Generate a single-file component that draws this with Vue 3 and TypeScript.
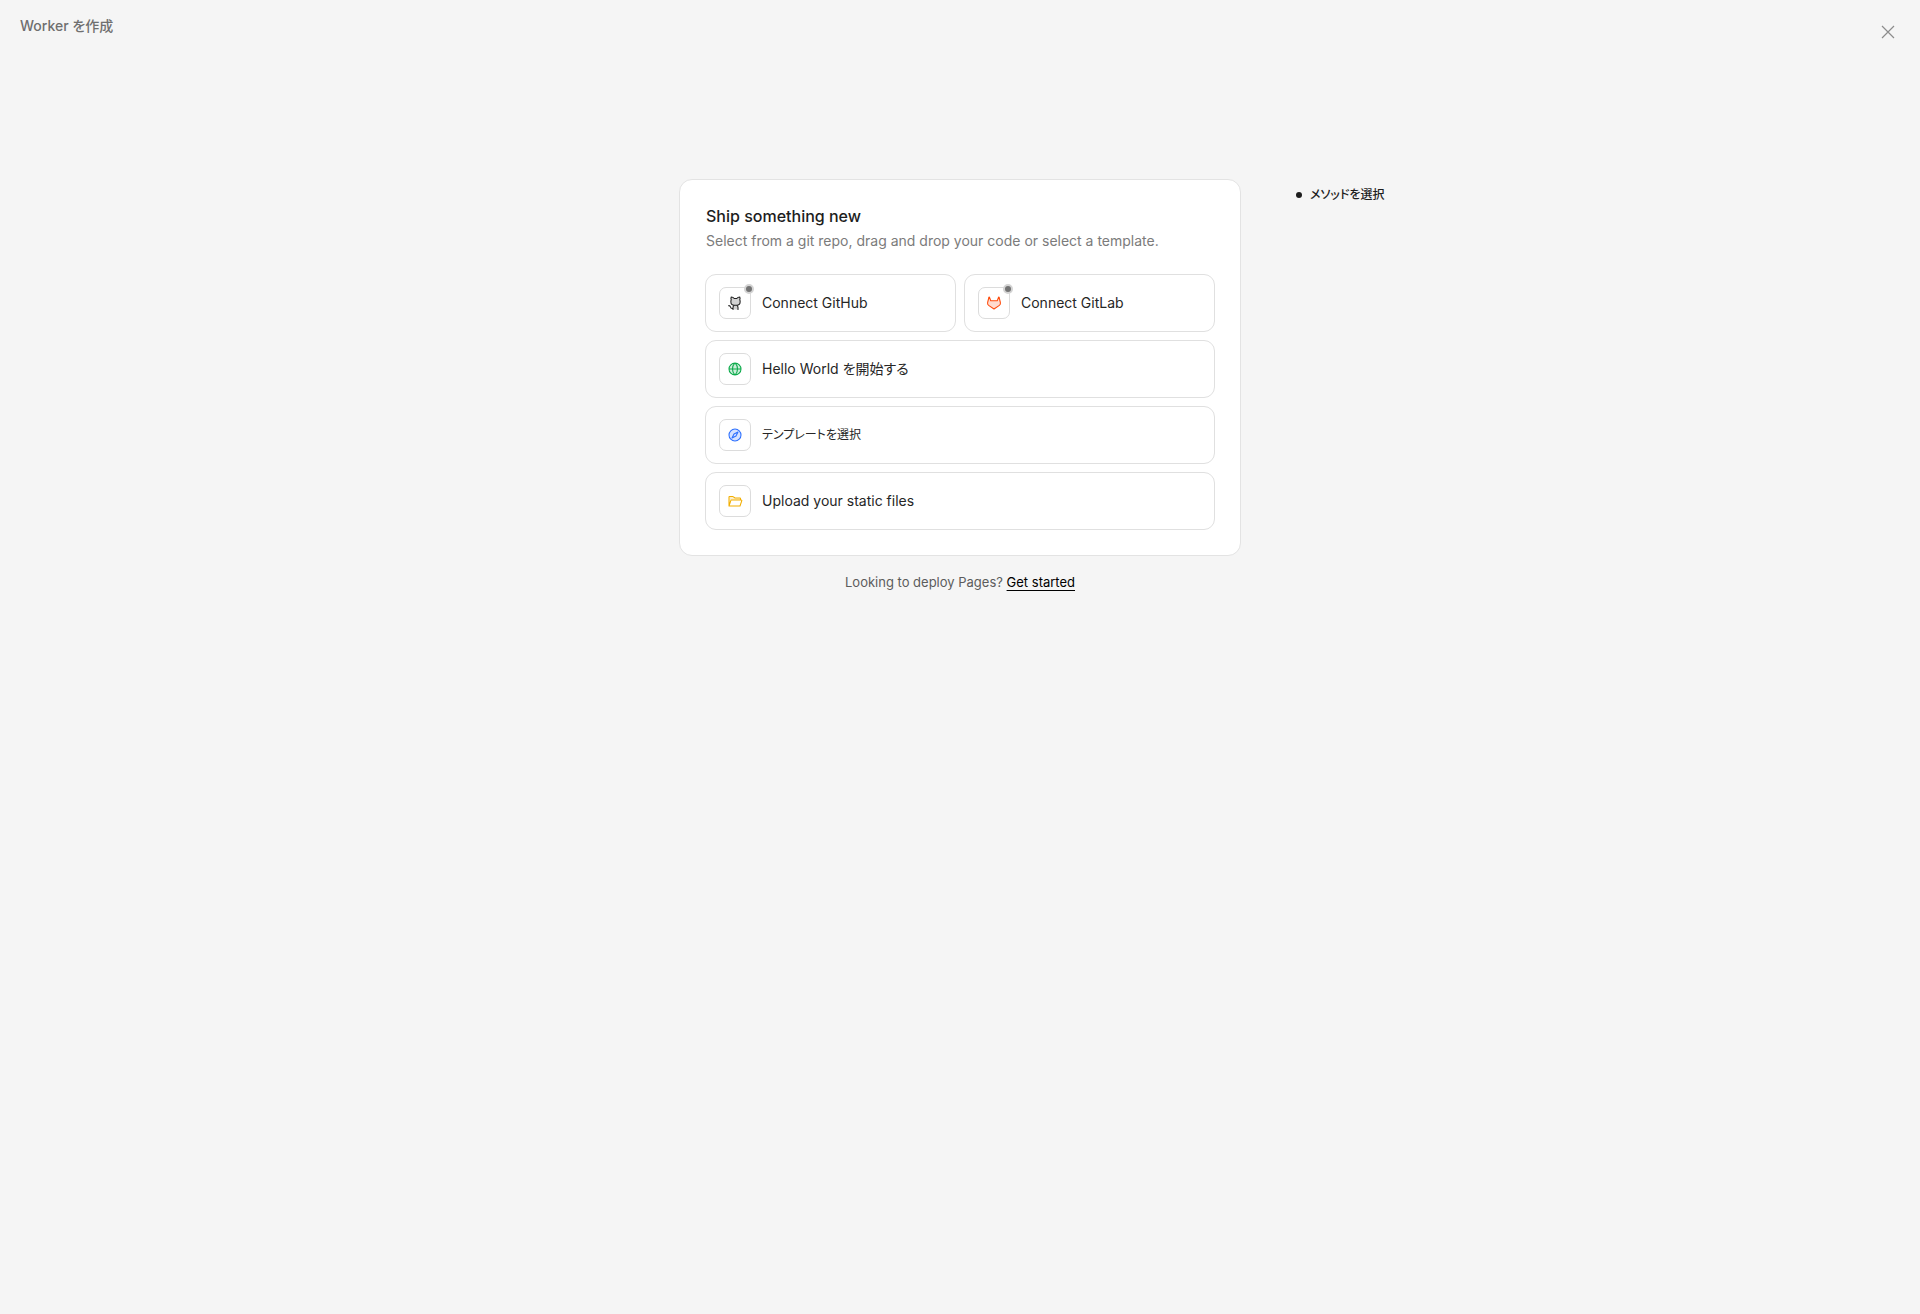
<script setup lang="ts">
interface Option {
  label: string
  color: string
  fill: string
  lines: string
  half?: boolean
  kana?: boolean
}

const options: Option[] = [
  {
    label: 'Connect GitHub',
    color: '#1f1f1f',
    half: true,
    fill: 'M208 104v8a48 48 0 0 1-48 48 32 32 0 0 1 16 32v40H96v-40a32 32 0 0 1 16-32 48 48 0 0 1-48-48v-8a49 49 0 0 1 4-27A52 52 0 0 1 68 32a60 60 0 0 1 48 24h40a60 60 0 0 1 48-24 52 52 0 0 1 0 45A49 49 0 0 1 208 104Z',
    lines: 'M96 232v-32a40 40 0 0 1 18-34M176 232v-32a40 40 0 0 0-18-34M96 216H84a28 28 0 0 1-28-24 28 28 0 0 0-28-22M116 56A60 60 0 0 0 68 32a52 52 0 0 0 0 45A49 49 0 0 0 62 104v8a54 54 0 0 0 54 52h40a54 54 0 0 0 54-52v-8a49 49 0 0 0-6-27A52 52 0 0 0 204 32a60 60 0 0 0-48 24Z',
  },
  {
    label: 'Connect GitLab',
    color: '#ff4c0d',
    half: true,
    fill: 'M26 120 48 36 76 92h104l28-56 22 84a44 44 0 0 1-16 46l-86 58-86-58a44 44 0 0 1-16-46Z',
    lines: 'M26 120 47 36a4 4 0 0 1 8 0L76 92h104l21-56a4 4 0 0 1 8 0l21 84a44 44 0 0 1-16 46l-86 58-86-58a44 44 0 0 1-16-46Z',
  },
  {
    label: 'Hello World を開始する',
    color: '#0cab4b',
    fill: 'M128 32a96 96 0 1 0 0 192 96 96 0 0 0 0-192Z',
    lines: 'M128 32a96 96 0 1 0 0 192 96 96 0 0 0 0-192ZM88 128c0 37 14 71 35 94a8 8 0 0 0 10 0C154 199 168 165 168 128s-14-71-35-94a8 8 0 0 0-10 0C102 57 88 91 88 128ZM32 128h192',
  },
  {
    label: 'テンプレートを選択',
    color: '#2b6fff',
    kana: true,
    fill: 'M128 32a96 96 0 1 0 0 192 96 96 0 0 0 0-192Z',
    lines: 'M128 32a96 96 0 1 0 0 192 96 96 0 0 0 0-192ZM144 144l-64 32 32-64 64-32Z',
  },
  {
    label: 'Upload your static files',
    color: '#f2ae00',
    fill: 'M32 208V64a8 8 0 0 1 8-8h53l35 24h80a8 8 0 0 1 8 8v24H70a8 8 0 0 0-8 6Z',
    lines: 'M32 208V64a8 8 0 0 1 8-8h53a8 8 0 0 1 5 2L128 80h80a8 8 0 0 1 8 8v24M32 208l30-90a8 8 0 0 1 8-6H229a8 8 0 0 1 8 11L208 208Z',
  },
]
</script>

<template>
  <div class="page">
    <header class="top">
      <span class="crumb">Worker を作成</span>
      <button class="close" type="button" aria-label="Close">
        <svg viewBox="0 0 20 20" width="20" height="20" aria-hidden="true">
          <path d="M4 4l12 12M16 4 4 16" fill="none" stroke="currentColor" stroke-width="1.200" />
        </svg>
      </button>
    </header>

    <div class="layout">
      <main class="main">
        <section class="card">
          <div class="intro">
            <h1 class="title">Ship something new</h1>
            <p class="subtitle">Select from a git repo, drag and drop your code or select a template.</p>
          </div>
          <div class="options">
            <button
              v-for="option in options"
              :key="option.label"
              type="button"
              class="option"
              :class="{ half: option.half }"
            >
              <span class="tile" :style="{ color: option.color }">
                <svg viewBox="0 0 256 256" width="16" height="16" aria-hidden="true">
                  <path :d="option.fill" fill="currentColor" opacity="0.2" />
                  <path
                    :d="option.lines"
                    fill="none"
                    stroke="currentColor"
                    stroke-width="17"
                    stroke-linecap="round"
                    stroke-linejoin="round"
                  />
                </svg>
                <span v-if="option.half" class="dot"></span>
              </span>
              <span :class="{ kana: option.kana }">{{ option.label }}</span>
            </button>
          </div>
        </section>
        <p class="footnote">Looking to deploy Pages? <a href="#">Get started</a></p>
      </main>
      <ol class="steps">
        <li><span class="bullet"></span><span class="kana">メソッドを選択</span></li>
      </ol>
    </div>
  </div>
</template>

<style>
body {
  margin: 0;
  background: #f5f5f5;
}
</style>

<style scoped>
.page {
  min-height: 100vh;
  background: #f5f5f5;
  color: #1d1d1d;
  font-family: Inter, 'Noto Sans CJK JP', sans-serif;
  font-feature-settings: 'palt';
  font-size: 14px;
  line-height: 20px;
}
.top {
  display: flex;
  justify-content: space-between;
  align-items: flex-start;
  padding: 16px 20px;
}
.crumb {
  color: #6f6f6f;
  font-weight: 500;
}
.close {
  display: flex;
  margin: 6px 2px 0 0;
  padding: 0;
  border: 0;
  background: none;
  color: #8c8c8c;
}
.layout {
  display: grid;
  grid-template-columns: minmax(0, 1fr) minmax(0, 562px) minmax(0, 1fr);
  padding-top: 121px;
}
.main {
  grid-column: 2;
}
.card {
  padding: 25px;
  border: 1px solid #e3e3e3;
  border-radius: 13px;
  background: #fff;
}
.intro {
  padding: 0 1px;
}
.title {
  margin: 0;
  font-size: 16px;
  line-height: 22px;
  font-weight: 500;
}
.subtitle {
  margin: 0;
  color: #7b7b7b;
  line-height: 28px;
}
.options {
  display: grid;
  grid-template-columns: 1fr 1fr;
  gap: 8px;
  margin-top: 19px;
}
.option {
  grid-column: span 2;
  display: flex;
  align-items: center;
  gap: 11px;
  padding: 12px 13px;
  border: 1px solid #e0e0e0;
  border-radius: 11px;
  background: #fff;
  color: #262626;
  font: inherit;
  font-feature-settings: inherit;
  text-align: left;
}
.option.half {
  grid-column: span 1;
}
.tile {
  position: relative;
  display: flex;
  align-items: center;
  justify-content: center;
  box-sizing: border-box;
  width: 32px;
  height: 32px;
  border: 1px solid #dcdcdc;
  border-radius: 7px;
}
.kana {
  font-size: 12px;
}
.dot {
  position: absolute;
  top: -4px;
  right: -4px;
  width: 6px;
  height: 6px;
  border: 2px solid #d4d4d4;
  border-radius: 50%;
  background: #737373;
}
.footnote {
  margin: 16px 0 0;
  color: #5c5c5c;
  font-size: 13px;
  text-align: center;
}
.footnote a {
  color: #000;
  text-decoration: underline;
  text-underline-offset: 3px;
}
.steps {
  margin: 6px 0 0 55px;
  padding: 0;
  list-style: none;
  font-weight: 500;
}
.steps li {
  display: flex;
  align-items: center;
  gap: 8px;
}
.bullet {
  width: 6px;
  height: 6px;
  border-radius: 50%;
  background: #1d1d1d;
}
</style>
